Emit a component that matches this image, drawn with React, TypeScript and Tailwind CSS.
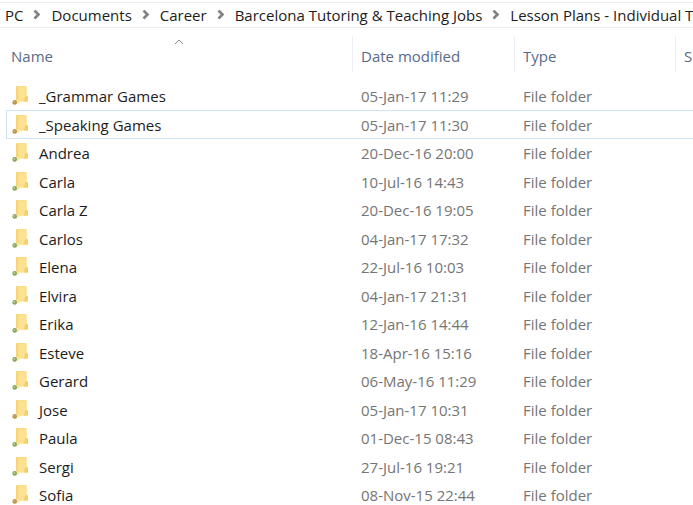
import React from 'react';

type Status = 'synced' | 'modified';

interface Folder {
    name: string;
    modified: string;
    status: Status;
    focused?: boolean;
}

const crumbs = [
    'PC',
    'Documents',
    'Career',
    'Barcelona Tutoring & Teaching Jobs',
    'Lesson Plans - Individual Tutoring',
];

const folders: Folder[] = [
    { name: '_Grammar Games', modified: '05-Jan-17 11:29', status: 'modified' },
    {
        name: '_Speaking Games',
        modified: '05-Jan-17 11:30',
        status: 'modified',
        focused: true,
    },
    { name: 'Andrea', modified: '20-Dec-16 20:00', status: 'synced' },
    { name: 'Carla', modified: '10-Jul-16 14:43', status: 'synced' },
    { name: 'Carla Z', modified: '20-Dec-16 19:05', status: 'synced' },
    { name: 'Carlos', modified: '04-Jan-17 17:32', status: 'synced' },
    { name: 'Elena', modified: '22-Jul-16 10:03', status: 'synced' },
    { name: 'Elvira', modified: '04-Jan-17 21:31', status: 'synced' },
    { name: 'Erika', modified: '12-Jan-16 14:44', status: 'synced' },
    { name: 'Esteve', modified: '18-Apr-16 15:16', status: 'synced' },
    { name: 'Gerard', modified: '06-May-16 11:29', status: 'synced' },
    { name: 'Jose', modified: '05-Jan-17 10:31', status: 'modified' },
    { name: 'Paula', modified: '01-Dec-15 08:43', status: 'synced' },
    { name: 'Sergi', modified: '27-Jul-16 19:21', status: 'synced' },
    { name: 'Sofia', modified: '08-Nov-15 22:44', status: 'modified' },
];

function Chevron() {
    return (
        <svg
            viewBox="0 0 8 10"
            className="h-2.5 w-2 shrink-0"
            fill="none"
            stroke="#808080"
            strokeWidth="2.6"
            aria-hidden="true"
        >
            <path d="M1.5 0.5 5.5 4.5 1.5 8.5" />
        </svg>
    );
}

function FolderIcon({ status }: { status: Status }) {
    return (
        <svg
            viewBox="0 0 18 20"
            className="h-5 w-[18px] shrink-0"
            aria-hidden="true"
        >
            <path d="M5 0h10.5v9.5l1.5 1V15.5H5z" fill="#f9dc85" />
            <path d="M5 0l2.5 1.5v16L5 15.5z" fill="#f5d577" />
            <path d="M7.5 1.2h8V15.5h-8z" fill="#fde193" />
            <path d="M14 10.5h3v5h-4z" fill="#f3cf6b" />
            <path d="M5 14h2.5v3.5H5z" fill="#fae6a8" />
            <circle
                cx="3.7"
                cy="16.4"
                r="2.3"
                fill={status === 'synced' ? '#86a556' : '#b8913f'}
            />
            <circle
                cx="3.4"
                cy="16"
                r="0.9"
                fill={status === 'synced' ? '#b9d096' : '#d6b675'}
            />
        </svg>
    );
}

export default function App() {
    return (
        <div className="min-h-screen overflow-hidden bg-white pt-0.5 font-['Open_Sans','Noto_Sans',sans-serif] text-[15px] leading-5 whitespace-nowrap text-[#1c1c1c]">
            <nav
                aria-label="Address"
                className="overflow-hidden border-y border-[#ececec]"
            >
                <ol className="flex h-6 items-center gap-2.5 pl-[5px]">
                    {crumbs.map((crumb, i) => (
                        <li key={crumb} className="flex items-center gap-2.5">
                            {i > 0 && <Chevron />}
                            <a href="#">{crumb}</a>
                        </li>
                    ))}
                </ol>
            </nav>

            <div className="overflow-hidden pt-2">
                <table className="w-full min-w-[760px] table-fixed border-separate border-spacing-0 text-left">
                    <colgroup>
                        <col className="w-1.5" />
                        <col className="w-[347px]" />
                        <col className="w-[162px]" />
                        <col className="w-[161px]" />
                        <col />
                    </colgroup>
                    <thead className="text-[#596a88]">
                        <tr className="h-9 *:pt-1">
                            <td />
                            <th
                                aria-sort="ascending"
                                className="relative border-r border-[#e9eff5] pl-[5px] font-normal"
                            >
                                <svg
                                    viewBox="0 0 10 6"
                                    className="absolute inset-x-0 top-[3px] mx-auto h-1.5 w-2.5"
                                    fill="none"
                                    stroke="#8a8a8a"
                                    aria-hidden="true"
                                >
                                    <path d="M1 5l4-4 4 4" />
                                </svg>
                                Name
                            </th>
                            <th className="border-r border-[#e9eff5] pl-2 font-normal">
                                Date modified
                            </th>
                            <th className="border-r border-[#e9eff5] pl-2 font-normal">
                                Type
                            </th>
                            <th className="pl-2 font-normal">Size</th>
                        </tr>
                    </thead>
                    <tbody className="text-[#757575] before:block before:h-2.5">
                        {folders.map((folder) => (
                            <tr
                                key={folder.name}
                                className={
                                    folder.focused
                                        ? 'h-[29px] *:border-y *:border-[#cfe5f5]'
                                        : 'odd:h-7 even:h-[29px] *:border-transparent'
                                }
                            >
                                <td className="border-y-0!" />
                                <td className="border-l pl-1">
                                    <div className="flex items-center gap-2.5 text-[#1c1c1c]">
                                        <FolderIcon status={folder.status} />
                                        {folder.name}
                                    </div>
                                </td>
                                <td className="pl-2">{folder.modified}</td>
                                <td className="pl-2">File folder</td>
                                <td />
                            </tr>
                        ))}
                    </tbody>
                </table>
            </div>
        </div>
    );
}
